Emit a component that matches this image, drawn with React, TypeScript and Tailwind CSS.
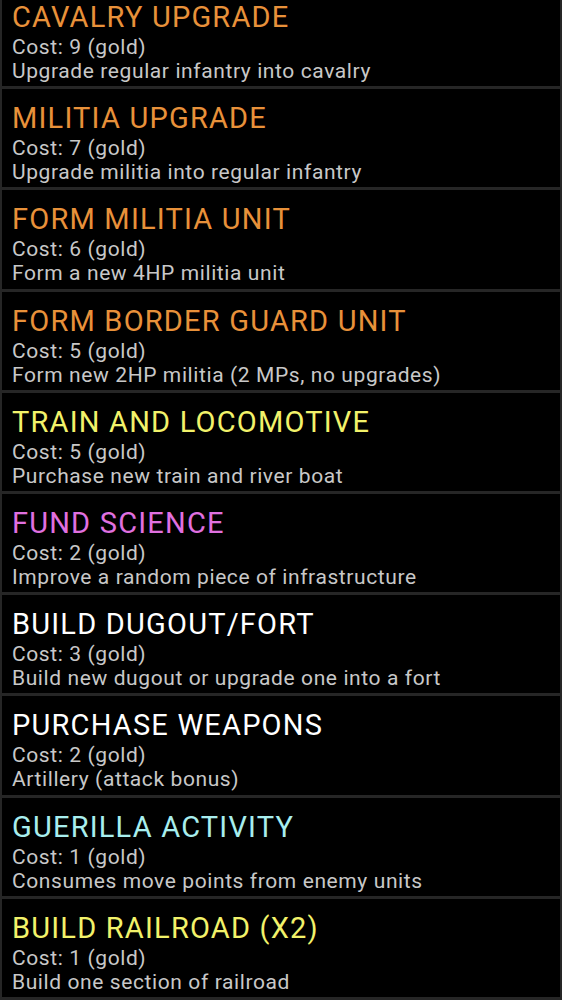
const upgrades = [
  { title: "CAVALRY UPGRADE", cost: 9, desc: "Upgrade regular infantry into cavalry", color: "text-[#e8913a]" },
  { title: "MILITIA UPGRADE", cost: 7, desc: "Upgrade militia into regular infantry", color: "text-[#e8913a]" },
  { title: "FORM MILITIA UNIT", cost: 6, desc: "Form a new 4HP militia unit", color: "text-[#e8913a]" },
  { title: "FORM BORDER GUARD UNIT", cost: 5, desc: "Form new 2HP militia (2 MPs, no upgrades)", color: "text-[#e8913a]" },
  { title: "TRAIN AND LOCOMOTIVE", cost: 5, desc: "Purchase new train and river boat", color: "text-[#f2f26a]" },
  { title: "FUND SCIENCE", cost: 2, desc: "Improve a random piece of infrastructure", color: "text-[#e070e0]" },
  { title: "BUILD DUGOUT/FORT", cost: 3, desc: "Build new dugout or upgrade one into a fort", color: "text-white" },
  { title: "PURCHASE WEAPONS", cost: 2, desc: "Artillery (attack bonus)", color: "text-white" },
  { title: "GUERILLA ACTIVITY", cost: 1, desc: "Consumes move points from enemy units", color: "text-[#a8eeee]" },
  { title: "BUILD RAILROAD (X2)", cost: 1, desc: "Build one section of railroad", color: "text-[#f2f26a]" },
];

export default function App() {
  return (
    <div className="h-[1000px] overflow-hidden bg-black font-['Roboto',sans-serif]">
      <div className="-mt-[12px] flex flex-col">
        {upgrades.map((u) => (
          <div
            key={u.title}
            className="h-[101.2px] shrink-0 border-x-2 border-b-[3px] border-[#262626] px-[10px] pt-[12px]"
          >
            <p className={`text-[29px] leading-[35px] tracking-[1.2px] ${u.color}`}>{u.title}</p>
            <p className="text-[21px] leading-[24px] tracking-[0.6px] text-[#c8c8c8]">Cost: {u.cost} (gold)</p>
            <p className="text-[21px] leading-[24px] tracking-[0.6px] text-[#c8c8c8]">{u.desc}</p>
          </div>
        ))}
      </div>
    </div>
  );
}
